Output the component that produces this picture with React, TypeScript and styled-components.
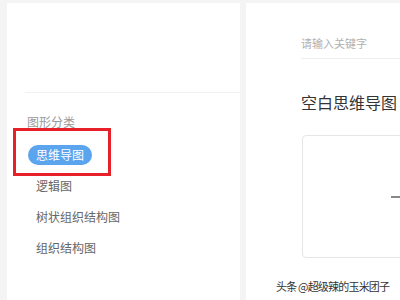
import React from "react";
import styled, { createGlobalStyle } from "styled-components";

const Global = createGlobalStyle`
  html, body { margin: 0; padding: 0; width: 400px; height: 300px; overflow: hidden; background: #f4f4f4; }
  #root { width: 400px; height: 300px; }
  * { box-sizing: border-box; }
`;

const FONT = `"Noto Sans CJK SC", "Noto Sans", sans-serif`;

const Page = styled.div`
  position: relative;
  width: 400px;
  height: 300px;
  display: flex;
  gap: 6px;
  padding: 3px 0 0 7px;
  overflow: hidden;
  font-family: ${FONT};
`;

const Sidebar = styled.div`
  width: 233px;
  flex: none;
  background: #fff;
  display: flex;
  flex-direction: column;
`;

const SideTop = styled.div`
  height: 90px;
  margin-left: 18px;
  border-bottom: 1px solid #f0f0f0;
`;

const SectionTitle = styled.div`
  margin: 21px 0 0 20px;
  font-size: 12px;
  line-height: 16px;
  color: #9a9a9a;
`;

const List = styled.div`
  display: flex;
  flex-direction: column;
  align-items: flex-start;
  gap: 11px;
  margin: 15px 0 0 21px;
`;

const Item = styled.div<{ $active?: boolean }>`
  position: relative;
  height: 20px;
  padding: 0 8px;
  border-radius: 10px;
  font-size: 12px;
  line-height: 20px;
  color: ${(p) => (p.$active ? "#fff" : "#666")};
  background: ${(p) => (p.$active ? "#5ba4ee" : "transparent")};
`;

const Highlight = styled.div`
  position: absolute;
  left: -15px;
  top: -17px;
  right: -19px;
  bottom: -11px;
  border: 3px solid #e8202a;
  pointer-events: none;
`;

const Main = styled.div`
  flex: 1;
  min-width: 0;
  background: #fff;
  padding: 32px 0 0 55px;
  display: flex;
  flex-direction: column;
  overflow: hidden;
`;

const Search = styled.div`
  font-size: 11px;
  line-height: 16px;
  color: #b0b0b0;
  padding-bottom: 7px;
  border-bottom: 1px solid #eeeeee;
`;

const Title = styled.div`
  margin-top: 32px;
  font-size: 16px;
  line-height: 22px;
  color: #333;
`;

const Card = styled.div`
  margin-top: 22px;
  margin-left: 1px;
  width: 198px;
  height: 123px;
  flex: none;
  border: 1px solid #e6e6e6;
  border-radius: 4px;
  display: flex;
  align-items: center;
  justify-content: center;
`;

const Plus = styled.div`
  position: relative;
  width: 20px;
  height: 20px;
  &::before, &::after {
    content: "";
    position: absolute;
    background: #888;
  }
  &::before { left: 0; right: 0; top: 9px; height: 2px; }
  &::after { top: 0; bottom: 0; left: 9px; width: 2px; }
`;

const Watermark = styled.div`
  position: absolute;
  left: 276px;
  top: 278px;
  font-size: 11px;
  line-height: 16px;
  color: #333;
  letter-spacing: -0.8px;
  text-shadow: 0 0 2px #fff, 0 0 2px #fff;
  white-space: nowrap;
`;

export default function App() {
  const items = ["思维导图", "逻辑图", "树状组织结构图", "组织结构图"];
  return (
    <>
      <Global />
      <Page>
        <Sidebar>
          <SideTop />
          <SectionTitle>图形分类</SectionTitle>
          <List>
            {items.map((t, i) => (
              <Item key={t} $active={i === 0}>
                {t}
                {i === 0 && <Highlight />}
              </Item>
            ))}
          </List>
        </Sidebar>
        <Main>
          <Search>请输入关键字</Search>
          <Title>空白思维导图</Title>
          <Card>
            <Plus />
          </Card>
        </Main>
        <Watermark>头条 @超级辣的玉米团子</Watermark>
      </Page>
    </>
  );
}
